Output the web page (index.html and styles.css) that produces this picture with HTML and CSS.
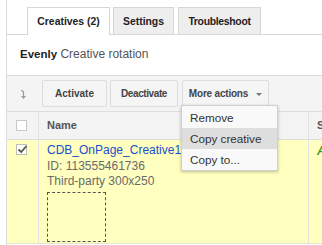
FILE: index.html
```html
<!DOCTYPE html>
<html>
<head>
<meta charset="utf-8">
<link rel="stylesheet" href="styles.css">
</head>
<body>
<div class="panel">
  <div class="tabs">
    <div class="tab active">Creatives (2)</div>
    <div class="tab">Settings</div>
    <div class="tab t-trouble">Troubleshoot</div>
  </div>
  <div class="rotation"><b>Evenly</b> Creative rotation</div>
  <div class="toolbar">
    <span class="tool-icon">
      <svg width="8" height="11" viewBox="0 0 8 11"><path d="M2 1.5 Q4.5 1.5 4.5 4 V8.5" fill="none" stroke="#9a9a9a" stroke-width="1.2"/><path d="M2 7 L4.5 10 L7 7 Z" fill="#9a9a9a"/></svg>
    </span>
    <button class="btn b-act">Activate</button>
    <button class="btn b-deact">Deactivate</button>
    <button class="btn b-more">More actions <span class="caret"></span></button>
  </div>
  <div class="table">
    <div class="row head">
      <div class="c-check"><span class="box"></span></div>
      <div class="c-name">Name</div>
      <div class="c-status">Status</div>
    </div>
    <div class="row sel">
      <div class="c-check"><span class="box checked"><svg width="11" height="9" viewBox="0 0 11 9"><path d="M1.5 4.5 L4.2 7 L9.5 1" fill="none" stroke="#555" stroke-width="1.8"/></svg></span></div>
      <div class="c-name">
        <div class="link">CDB_OnPage_Creative1</div>
        <div class="meta">ID: 113555461736</div>
        <div class="meta">Third-party 300x250</div>
        <div class="preview"></div>
      </div>
      <div class="c-status"><span class="active-txt">Active</span></div>
    </div>
  </div>
</div>
<div class="menu">
  <div class="item">Remove</div>
  <div class="item hover">Copy creative</div>
  <div class="item">Copy to...</div>
</div>
</body>
</html>
```

FILE: styles.css
```css
html, body {
  margin: 0;
  padding: 0;
  background: #fff;
  font-family: "Liberation Sans", Arial, sans-serif;
  overflow: hidden;
}
body {
  width: 322px;
  height: 245px;
  position: relative;
}
.panel {
  margin-left: 6px;
  border-left: 1px solid #dcdcdc;
  min-height: 245px;
  overflow: hidden;
}
.tabs {
  display: flex;
  gap: 3px;
  padding: 7px 0 0 20px;
  border-bottom: 1px solid #d6d6d6;
  height: 35px;
  box-sizing: border-box;
  align-items: flex-end;
}
.tab {
  height: 27px;
  box-sizing: border-box;
  border: 1px solid #d6d6d6;
  border-bottom: none;
  background: #eeeeee;
  font-size: 10.4px;
  font-weight: bold;
  color: #222;
  padding: 0 9px;
  line-height: 27px;
  flex-shrink: 0;
}
.tab.active {
  background: #fff;
  height: 28px;
  margin-bottom: -1px;
  line-height: 27px;
  width: 83px;
  text-align: center;
}
.t-trouble {
  margin-left: 1px;
  width: 83px;
  padding: 0;
  text-align: center;
  letter-spacing: -0.3px;
}
.rotation {
  height: 41px;
  box-sizing: border-box;
  padding: 12px 0 0 13px;
  font-size: 12px;
  color: #555;
  border-bottom: 1px solid #d6d6d6;
}
.rotation b {
  color: #222;
  font-size: 11.5px;
}
.toolbar {
  height: 36px;
  background: #f4f4f4;
  display: flex;
  align-items: center;
  padding-left: 11px;
  box-sizing: border-box;
  border-bottom: 1px solid #dedede;
}
.tool-icon {
  width: 24px;
  height: 11px;
  display: flex;
  margin-top: 2px;
  padding-left: 1px;
  box-sizing: border-box;
  flex-shrink: 0;
}
.btn {
  height: 27px;
  box-sizing: border-box;
  border: 1px solid #dcdcdc;
  border-radius: 2px;
  background: #f5f5f5;
  font-family: "Liberation Sans", Arial, sans-serif;
  font-size: 10px;
  font-weight: bold;
  color: #444;
  padding: 0;
  margin-right: 3px;
  display: flex;
  align-items: center;
  justify-content: center;
  flex-shrink: 0;
  white-space: nowrap;
}
.b-act { width: 65px; }
.b-deact { width: 68px; letter-spacing: -0.4px; }
.b-more { width: 87px; margin-left: 1px; letter-spacing: -0.2px; }
.caret {
  display: inline-block;
  width: 0;
  height: 0;
  border-left: 3px solid transparent;
  border-right: 3px solid transparent;
  border-top: 3px solid #777;
  margin-left: 8px;
  margin-top: 1px;
}
.row {
  display: flex;
}
.row.head {
  height: 28px;
  background: #f3f3f3;
  border-bottom: 1px solid #dedede;
  box-sizing: border-box;
  font-size: 11px;
  font-weight: bold;
  color: #555;
}
.c-check {
  width: 32px;
  flex-shrink: 0;
  box-sizing: border-box;
  border-right: 1px solid #e2e2e2;
  display: flex;
  justify-content: center;
  padding-top: 8px;
  padding-right: 3px;
}
.row.sel .c-check { padding-top: 4px; }
.c-name {
  width: 270px;
  flex-shrink: 0;
  box-sizing: border-box;
  border-right: 1px solid #e2e2e2;
  padding: 0 8px;
}
.row.head .c-name, .row.head .c-status {
  line-height: 27px;
}
.c-status {
  padding-left: 8px;
  white-space: nowrap;
  flex-shrink: 0;
}
.box {
  display: block;
  width: 11px;
  height: 11px;
  box-sizing: border-box;
  border: 1px solid #c8c8c8;
  background: #fff;
  position: relative;
}
.box.checked {
  background: #fdfdf0;
  border-color: #bdbdbd;
}
.box.checked svg {
  position: absolute;
  left: 0;
  top: 0;
}
.row.sel {
  background: #ffffbf;
  border-left: 1px solid #3b6fd0;
  margin-left: -1px;
  height: 104px;
  box-sizing: border-box;
  border-bottom: 1px solid #e6e6d0;
}
.row.sel .c-name {
  padding-top: 3px;
  font-size: 12px;
  line-height: 15.5px;
}
.row.sel .c-status {
  padding-top: 4px;
  font-size: 12px;
  line-height: 15.5px;
}
.link { color: #1a4fce; white-space: nowrap; }
.meta { color: #6a6a6a; }
.preview {
  width: 59px;
  height: 50px;
  box-sizing: border-box;
  border: 1px dashed #555;
  margin-top: 2px;
}
.active-txt {
  color: #3c9a1e;
  font-weight: bold;
  font-style: italic;
}
.menu {
  position: absolute;
  left: 181px;
  top: 105px;
  width: 97px;
  box-sizing: border-box;
  background: #f9f9f9;
  border: 1px solid #d0d0d0;
  box-shadow: 0 1px 3px rgba(0,0,0,0.25);
  padding: 1px 0 0;
  font-size: 11.7px;
  color: #333;
}
.item {
  height: 21px;
  line-height: 21px;
  padding-left: 8px;
  white-space: nowrap;
}
.item.hover { background: #dedede; }
```
